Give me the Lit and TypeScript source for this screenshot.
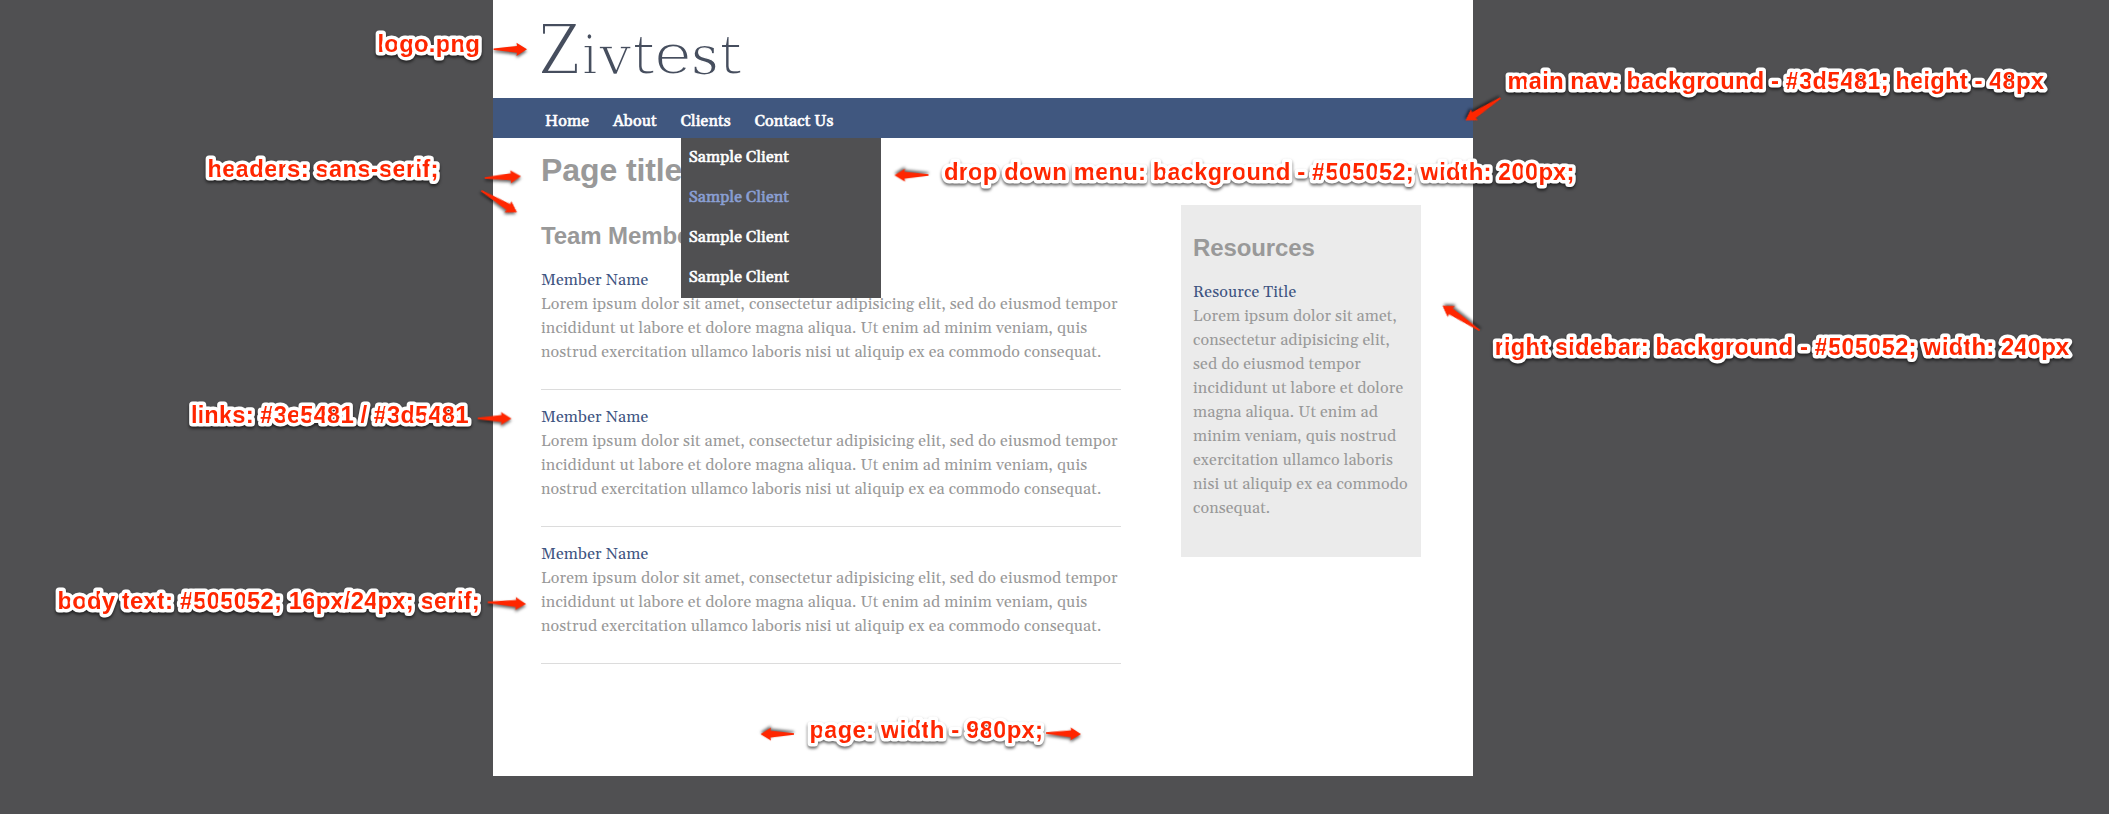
import { LitElement, html, svg, css } from "lit";
import { customElement } from "lit/decorators.js";

interface Note { text: string; x: number; y: number; width: number }
interface Arrow { from: [number, number]; to: [number, number] }
interface Letter { char: string; face: string; size: number; thin: number; x: number; stretch: number }

const NAV = ["Home", "About", "Clients", "Contact Us"];
const CLIENTS = ["Sample Client", "Sample Client", "Sample Client", "Sample Client"];
const ACTIVE_CLIENT = 1;

// Each wordmark letter is thinned by a white outline and stretched horizontally.
const LOGO: Letter[] = [
  { char: "Z", face: "serif", size: 69.5, thin: 1.9, x: -2.6, stretch: 0.86 },
  { char: "i", face: "narrow", size: 54, thin: 1.7, x: 41, stretch: 1 },
  { char: "v", face: "serif", size: 54, thin: 1.4, x: 58.3, stretch: 1.05 },
  { char: "t", face: "mono", size: 57, thin: 2.1, x: 88.6, stretch: 0.87 },
  { char: "e", face: "mono", size: 57, thin: 2.1, x: 111.8, stretch: 1.18 },
  { char: "s", face: "serif", size: 54, thin: 1.2, x: 150, stretch: 1 },
  { char: "t", face: "mono", size: 57, thin: 2.1, x: 175.6, stretch: 0.87 },
];

const MEMBER_LINES = [
  "Lorem ipsum dolor sit amet, consectetur adipisicing elit, sed do eiusmod tempor",
  "incididunt ut labore et dolore magna aliqua. Ut enim ad minim veniam, quis",
  "nostrud exercitation ullamco laboris nisi ut aliquip ex ea commodo consequat.",
];
const RESOURCE_LINES = [
  "Lorem ipsum dolor sit amet,",
  "consectetur adipisicing elit,",
  "sed do eiusmod tempor",
  "incididunt ut labore et dolore",
  "magna aliqua. Ut enim ad",
  "minim veniam, quis nostrud",
  "exercitation ullamco laboris",
  "nisi ut aliquip ex ea commodo",
  "consequat.",
];

const NOTES: Note[] = [
  { text: "logo.png", x: 377.5, y: 52, width: 102.5 },
  { text: "headers: sans-serif;", x: 207.5, y: 177, width: 231 },
  { text: "main nav: background - #3d5481; height - 48px", x: 1507.5, y: 89, width: 536.5 },
  { text: "drop down menu: background - #505052; width: 200px;", x: 944, y: 180, width: 630.5 },
  { text: "right sidebar: background - #505052; width: 240px", x: 1494.7, y: 355, width: 574.5 },
  { text: "links: #3e5481 / #3d5481", x: 191, y: 423, width: 277.5 },
  { text: "body text: #505052; 16px/24px; serif;", x: 57.5, y: 609, width: 422.3 },
  { text: "page: width - 980px;", x: 809.5, y: 738, width: 233.5 },
];

const ARROWS: Arrow[] = [
  { from: [493.6, 49.3], to: [527, 49.3] },
  { from: [484.7, 178], to: [521, 176.3] },
  { from: [481.3, 190.7], to: [517, 212.3] },
  { from: [1500.5, 98], to: [1465.5, 120.5] },
  { from: [928.5, 175], to: [894.5, 175.3] },
  { from: [1479.7, 330.5], to: [1442.5, 305.7] },
  { from: [477.7, 418.4], to: [511.5, 418.6] },
  { from: [487.7, 602.3], to: [526, 604] },
  { from: [794, 734], to: [760.5, 734.2] },
  { from: [1046, 733], to: [1081, 734.2] },
];

@customElement("app-root")
export class AppRoot extends LitElement {
  static styles = css`
    :host {
      display: block;
      position: relative;
      height: 814px;
      overflow: hidden;
      background: #505052;
      color: #999;
      font: 16px/24px Gelasio, Georgia, "Liberation Serif", serif;
      letter-spacing: 0.125px;
      white-space: nowrap;
    }
    .page {
      width: 980px;
      height: 776px;
      margin-left: 493px;
      background: #fff;
      display: flex;
      flex-direction: column;
    }
    .logo { height: 98px; padding-left: 48px; }
    .logo svg { display: block; overflow: visible; letter-spacing: 0; }
    .logo text { fill: #464e5e; stroke: #fff; }
    .serif { font-family: "DejaVu Serif", serif; }
    .narrow { font-family: "DejaVu Serif Condensed", "DejaVu Serif", serif; }
    .mono { font-family: "Liberation Mono", monospace; }
    nav {
      height: 40px;
      box-sizing: border-box;
      padding: 11px 0 0 52px;
      background: #40577f;
      display: flex;
      gap: 24px;
    }
    nav a { color: #fff; -webkit-text-stroke: 0.6px currentColor; }
    .tab { position: relative; }
    .menu {
      position: absolute;
      left: 0;
      top: 29px;
      width: 200px;
      background: #505052;
    }
    .menu a { display: block; padding: 0 0 2px 8px; line-height: 38px; }
    .menu a.active { color: #8a9fd3; }
    .columns { display: flex; padding: 0 52px 0 48px; justify-content: space-between; }
    .main { width: 580px; padding-top: 14px; }
    h1, h2 { font-family: "Liberation Sans", Arial, sans-serif; font-weight: bold; margin: 0; letter-spacing: -0.1px; }
    h1 { font-size: 32px; line-height: 36px; margin-bottom: 36px; }
    h2 { font-size: 24px; line-height: 24px; margin-bottom: 20px; }
    .member { padding-bottom: 25px; border-bottom: 1px solid #dcdcdc; margin-bottom: 15px; }
    .link { color: #3e5481; }
    .side {
      width: 240px;
      height: 352px;
      box-sizing: border-box;
      margin-top: 67px;
      padding: 31px 12px 0;
      background: #ebebeb;
    }
    .notes { position: absolute; left: 0; top: 0; pointer-events: none; letter-spacing: 0; }
    .notes text {
      font: bold 24px "Liberation Sans", Arial, sans-serif;
      fill: #ff2600;
      stroke: #fff;
      stroke-width: 7px;
      stroke-linejoin: round;
      paint-order: stroke;
      filter: drop-shadow(0 2px 1.5px rgba(0, 0, 0, 0.6));
    }
    .notes path { fill: #ff2600; filter: drop-shadow(0 2px 1.5px rgba(0, 0, 0, 0.6)); }
  `;

  private arrow({ from, to }: Arrow) {
    const dx = to[0] - from[0];
    const dy = to[1] - from[1];
    const len = Math.hypot(dx, dy);
    const angle = (Math.atan2(dy, dx) * 180) / Math.PI;
    const d = `M0 -.8L${len - 10} -3.4L${len - 10.5} -6.6L${len} 0L${len - 10.5} 6.6L${len - 10} 3.4L0 .8Z`;
    return svg`<g transform="translate(${from[0]} ${from[1]})"><path d=${d} transform="rotate(${angle})"></path></g>`;
  }

  render() {
    return html`
      <div class="page">
        <header class="logo">
          <svg width="220" height="98" viewBox="0 0 220 98">
            ${LOGO.map((l) => svg`<text class=${l.face} font-size=${l.size} stroke-width=${l.thin}
              transform="translate(${l.x} 74.3) scale(${l.stretch} 1)">${l.char}</text>`)}
          </svg>
        </header>
        <nav>
          ${NAV.map((label) => html`
            <div class="tab">
              <a>${label}</a>
              ${label === "Clients"
                ? html`<div class="menu">
                    ${CLIENTS.map((c, i) => html`<a class=${i === ACTIVE_CLIENT ? "active" : ""}>${c}</a>`)}
                  </div>`
                : null}
            </div>`)}
        </nav>
        <div class="columns">
          <section class="main">
            <h1>Page title</h1>
            <h2>Team Members</h2>
            ${[0, 1, 2].map(() => html`
              <div class="member">
                <div class="link">Member Name</div>
                ${MEMBER_LINES.map((l) => html`<div>${l}</div>`)}
              </div>`)}
          </section>
          <aside class="side">
            <h2>Resources</h2>
            <div class="link">Resource Title</div>
            ${RESOURCE_LINES.map((l) => html`<div>${l}</div>`)}
          </aside>
        </div>
      </div>
      <svg class="notes" width="2109" height="814" viewBox="0 0 2109 814">
        ${ARROWS.map((a) => this.arrow(a))}
        ${NOTES.map((n) => svg`<text x=${n.x} y=${n.y} textLength=${n.width}>${n.text}</text>`)}
      </svg>
    `;
  }
}
